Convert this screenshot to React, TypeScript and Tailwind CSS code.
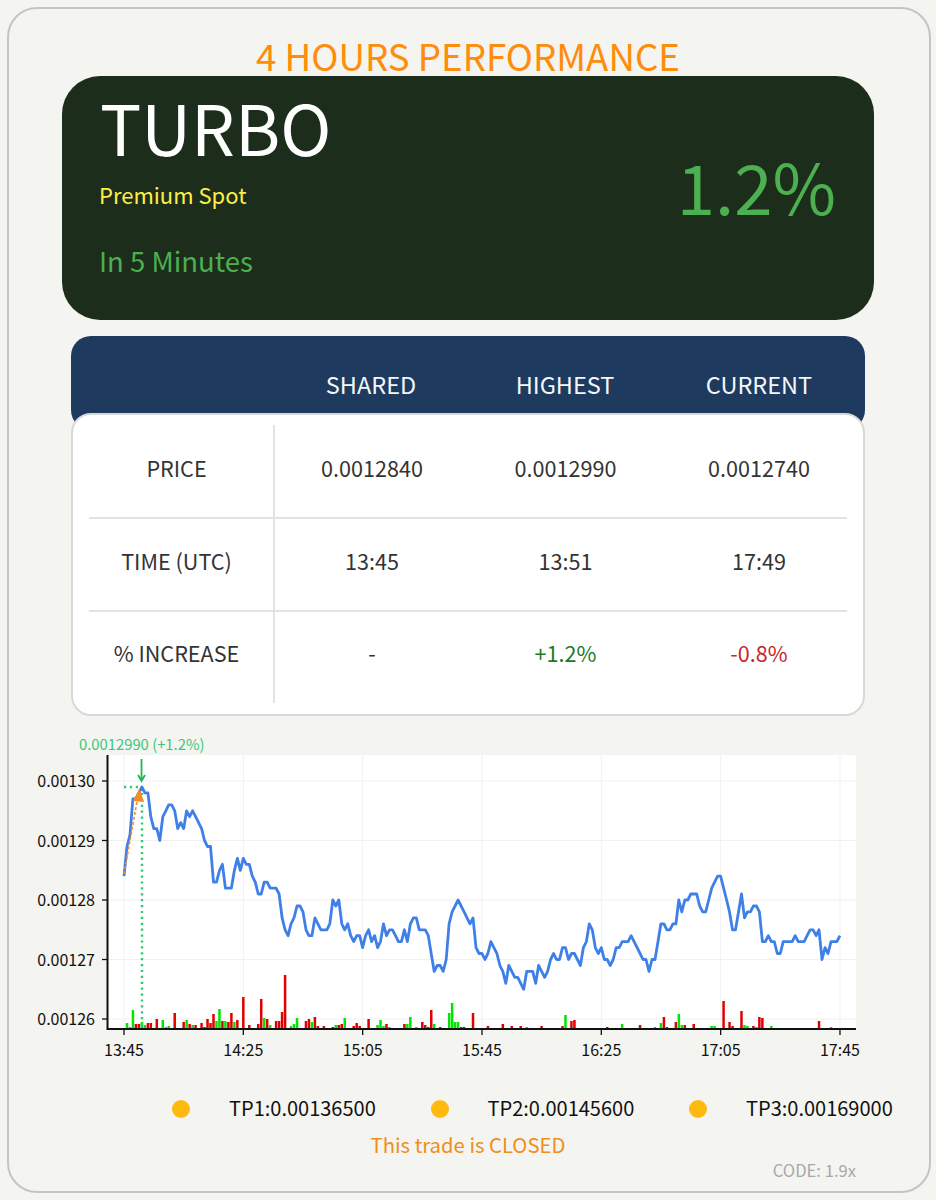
const FONT = '"Noto Sans CJK SC", "Noto Sans", sans-serif';

// close price per minute from 13:45 to 17:45, in units of 0.0000001
const prices = [
  1284, 1289, 1291, 1297, 1297, 1298, 1299, 1298, 1298, 1294,
  1292, 1292, 1290, 1294, 1295, 1296, 1296, 1295, 1292, 1293,
  1292, 1295, 1294, 1295, 1294, 1293, 1292, 1290, 1289, 1289,
  1283, 1283, 1285, 1286, 1282, 1282, 1282, 1285, 1287, 1285,
  1287, 1286, 1286, 1284, 1283, 1281, 1281, 1283, 1283, 1282,
  1282, 1282, 1281, 1277, 1275, 1274, 1276, 1277, 1279, 1279,
  1278, 1275, 1274, 1274, 1277, 1276, 1275, 1275, 1275, 1276,
  1280, 1279, 1280, 1276, 1275, 1276, 1274, 1273, 1274, 1274,
  1272, 1274, 1275, 1273, 1274, 1272, 1273, 1276, 1274, 1275,
  1275, 1274, 1273, 1273, 1275, 1273, 1276, 1277, 1277, 1275,
  1275, 1275, 1274, 1271, 1268, 1269, 1269, 1268, 1270, 1276,
  1278, 1279, 1280, 1279, 1278, 1277, 1276, 1277, 1272, 1271,
  1271, 1270, 1271, 1273, 1272, 1271, 1269, 1268, 1266, 1269,
  1268, 1267, 1267, 1266, 1265, 1268, 1268, 1268, 1266, 1269,
  1268, 1267, 1268, 1270, 1271, 1270, 1270, 1272, 1272, 1270,
  1271, 1271, 1270, 1269, 1272, 1273, 1276, 1275, 1272, 1271,
  1272, 1270, 1270, 1269, 1270, 1272, 1272, 1273, 1273, 1273,
  1274, 1273, 1272, 1271, 1270, 1270, 1268, 1270, 1270, 1273,
  1276, 1276, 1275, 1275, 1276, 1276, 1280, 1278, 1280, 1280,
  1281, 1281, 1281, 1279, 1278, 1278, 1280, 1282, 1283, 1284,
  1284, 1282, 1280, 1278, 1275, 1275, 1278, 1281, 1277, 1278,
  1278, 1279, 1279, 1278, 1273, 1273, 1274, 1273, 1273, 1271,
  1271, 1273, 1273, 1273, 1273, 1274, 1273, 1273, 1273, 1274,
  1275, 1275, 1274, 1275, 1270, 1272, 1271, 1273, 1273, 1273,
  1274,
];

// [minute, height in px], negative = green bar
const volumes: [number, number][] = [
  [1, -6], [2, -2], [3, -19], [4, 5], [5, 5], [6, -7], [7, -4], [8, 6], [9, 6], [11, 10],
  [12, 1], [13, -9], [14, -2], [15, -3], [16, -1], [17, 16], [18, -1], [19, -1], [20, 7], [21, -9],
  [22, 5], [23, -4], [24, 4], [25, 1], [26, 6], [27, 2], [28, 10], [29, 6], [30, 15], [31, -8],
  [32, -20], [33, 8], [34, -8], [35, 7], [36, 16], [37, -7], [38, 9], [40, 32], [42, 4], [43, 1],
  [44, 1], [45, 5], [46, 30], [47, -11], [48, 10], [49, -4], [50, -1], [51, 8], [52, 8], [53, 17],
  [54, 54], [55, 1], [56, -3], [57, -5], [58, -11], [59, 1], [61, 8], [62, 10], [63, -7], [64, 12],
  [65, 3], [67, 3], [69, 1], [70, 2], [71, -4], [72, 4], [73, 5], [74, -11], [75, 1], [76, 1],
  [77, 3], [78, 6], [79, 3], [80, 1], [82, 10], [83, -1], [85, -4], [86, -9], [87, -3], [88, 5],
  [89, -2], [90, 1], [92, 1], [94, 5], [95, -5], [96, -12], [98, -2], [100, 7], [101, 4], [102, 2],
  [103, 19], [104, -5], [105, 1], [106, 2], [107, -1], [109, -16], [110, -26], [111, -7], [112, -7], [113, 2],
  [114, 2], [116, 1], [117, 16], [120, 1], [122, 3], [124, 1], [126, 1], [127, 5], [128, 1], [129, 1],
  [130, 3], [133, 3], [135, -2], [137, 1], [140, 3], [141, -1], [147, 3], [148, -14], [150, 8], [151, 9],
  [153, -1], [154, -1], [156, 1], [162, 2], [165, 1], [167, -5], [173, 4], [175, 1], [178, -2], [179, -1],
  [180, -6], [181, 12], [182, 2], [185, 7], [186, -15], [187, -4], [188, 4], [190, -1], [191, 5], [195, 1],
  [197, -3], [198, -3], [201, 28], [203, 7], [204, 3], [206, 1], [207, 18], [208, -4], [209, -3], [211, 3],
  [212, -2], [213, 12], [214, 11], [217, -3], [233, 8], [237, -2], [238, 1],
];

const xTicks = ["13:45", "14:25", "15:05", "15:45", "16:25", "17:05", "17:45"];
const yTicks = ["0.00130", "0.00129", "0.00128", "0.00127", "0.00126"];

const minuteX = (m: number) => 124 + m * 2.983;
const priceY = (p: number) => 781 + (1300 - p) * 5.95;

function PriceChart() {
  const line = prices.map((p, i) => `${minuteX(i).toFixed(1)},${priceY(p).toFixed(1)}`).join(" ");
  return (
    <svg viewBox="30 733 840 335" className="block w-[840px] h-[335px] ml-[21px] mt-[17px]">
      <rect x="108" y="755" width="748" height="274" fill="#ffffff" />
      {xTicks.map((_, i) => (
        <line key={i} x1={124 + i * 119.33} x2={124 + i * 119.33} y1="755" y2="1029" stroke="#f1f1f1" />
      ))}
      {yTicks.map((_, i) => (
        <line key={i} x1="108" x2="856" y1={781 + i * 59.5} y2={781 + i * 59.5} stroke="#f1f1f1" />
      ))}

      {volumes.map(([m, h]) => (
        <rect
          key={m}
          x={minuteX(m) - 1.25}
          y={1029 - Math.abs(h)}
          width="2.5"
          height={Math.abs(h)}
          fill={h < 0 ? "#00e600" : "#e00000"}
        />
      ))}

      <line x1="124" x2="142" y1="787" y2="787" stroke="#30c878" strokeWidth="2.4" strokeDasharray="2.2 3.7" />
      <line x1="142" x2="142" y1="787" y2="1029" stroke="#30c878" strokeWidth="2.4" strokeDasharray="2.2 3.7" />

      <polyline points={line} fill="none" stroke="#3f80e8" strokeWidth="2.8" strokeLinejoin="round" />

      <line x1="124" y1="874" x2="138" y2="796" stroke="#f28c28" strokeWidth="1.6" strokeDasharray="3 2" />
      <polygon points="139.5,788 133,801 144,802" fill="#f28c28" />

      <path d="M141.5 759 V780 M138 775 L141.5 781 L145 775" fill="none" stroke="#1db954" strokeWidth="1.8" />

      <line x1="107.5" x2="107.5" y1="755" y2="1030" stroke="#111111" strokeWidth="2" />
      <line x1="107" x2="856" y1="1029" y2="1029" stroke="#111111" strokeWidth="2" />
      {xTicks.map((t, i) => (
        <g key={t}>
          <line x1={124 + i * 119.33} x2={124 + i * 119.33} y1="1029" y2="1035" stroke="#111111" strokeWidth="1.3" />
          <text x={124 + i * 119.33} y="1056" textAnchor="middle" fontSize="16" fill="#111111" fontFamily={FONT}>
            {t}
          </text>
        </g>
      ))}
      {yTicks.map((t, i) => (
        <g key={t}>
          <line x1="102" x2="107" y1={781 + i * 59.5} y2={781 + i * 59.5} stroke="#111111" strokeWidth="1.3" />
          <text x="95" y={787 + i * 59.5} textAnchor="end" fontSize="16" fill="#111111" fontFamily={FONT}>
            {t}
          </text>
        </g>
      ))}

      <text x="79" y="750" fontSize="14.8" fill="#3cc878" fontFamily={FONT}>
        0.0012990 (+1.2%)
      </text>
    </svg>
  );
}

const rows = [
  { label: "PRICE", shared: "0.0012840", highest: "0.0012990", current: "0.0012740" },
  { label: "TIME (UTC)", shared: "13:45", highest: "13:51", current: "17:49" },
  { label: "% INCREASE", shared: "-", highest: "+1.2%", current: "-0.8%" },
];

function PerformanceTable() {
  return (
    <>
      <div className="w-[794px] h-[94px] ml-[62px] mt-4 rounded-[20px] bg-[#1e3a5f] px-[18px] grid grid-cols-[185px_194px_194px_185px] text-[23.5px] text-[#f4f6f8] leading-[32px]">
        <div />
        <div className="text-center pt-[32px]">SHARED</div>
        <div className="text-center pt-[32px]">HIGHEST</div>
        <div className="text-center pt-[32px] pl-[9px]">CURRENT</div>
      </div>
      <div className="w-[794px] h-[303px] ml-[62px] -mt-[17px] rounded-[20px] border-2 border-[#d8d8d8] bg-white px-[16px] pt-[10px] text-[21.6px] text-[#333333]">
        {rows.map((row, i) => (
          <div
            key={row.label}
            className={`grid grid-cols-[186px_194px_193px_185px] border-b-2 ${i === 0 ? "h-[94px]" : "h-[93px]"} ${i < 2 ? "border-[#e2e2e2]" : "border-transparent"} ${i === 2 ? "[&>div]:pb-[8px]" : "[&>div]:pb-[6px]"}`}
          >
            <div className="flex items-center justify-center pr-[9px] border-r-2 border-[#e2e2e2]">{row.label}</div>
            <div className="flex items-center justify-center">{row.shared}</div>
            <div className={`flex items-center justify-center ${i === 2 ? "text-[#1b7a1f]" : ""}`}>{row.highest}</div>
            <div className={`flex items-center justify-center pl-[9px] ${i === 2 ? "text-[#c62828]" : ""}`}>{row.current}</div>
          </div>
        ))}
      </div>
    </>
  );
}

export default function App() {
  return (
    <div className="w-[936px] h-[1200px] bg-[#f4f4f0] pt-[7px] pl-[7px]" style={{ fontFamily: FONT }}>
      <div className="w-[924px] h-[1186px] rounded-[30px] border-2 border-[#c4c4c4] overflow-hidden">
        <div className="h-[67px] pt-[25px] pr-[2px] text-center text-[36.7px] leading-[43px] text-[#ff8c0a] whitespace-nowrap">4 HOURS PERFORMANCE</div>

        <div className="w-[812px] h-[244px] ml-[53px] rounded-[38px] bg-[#1c2e1b] flex justify-between pl-[37px] pr-[38px]">
          <div className="flex flex-col">
            <div className="text-[69px] leading-[70px] text-white mt-[15px] ml-[1px]">TURBO</div>
            <div className="text-[22px] leading-[30px] text-[#ffee44] mt-[18px]">Premium Spot</div>
            <div className="text-[27.5px] leading-[38px] text-[#4caf50] mt-[32px]">In 5 Minutes</div>
          </div>
          <div className="text-[69px] leading-[70px] text-[#4caf50] mt-[74px]">1.2%</div>
        </div>

        <PerformanceTable />
        <PriceChart />

        <div className="flex items-center ml-[163px] mt-[21px] h-[40px] text-[20px] text-[#111111] whitespace-nowrap">
          {["TP1:0.00136500", "TP2:0.00145600", "TP3:0.00169000"].map((tp) => (
            <div key={tp} className="flex items-center w-[258.5px] shrink-0">
              <span className="w-[18px] h-[18px] rounded-full bg-[#ffb90f] mr-[39px]" />
              <span className="mb-[2px]">{tp}</span>
            </div>
          ))}
        </div>
        <div className="text-center text-[20.3px] leading-[28px] mt-[1px] -ml-[2px] text-[#ee8f1c]">This trade is CLOSED</div>
        <div className="text-right text-[16.6px] leading-[22px] mt-[1px] pr-[73px] text-[#a8a8a8]">CODE: 1.9x</div>
      </div>
    </div>
  );
}
